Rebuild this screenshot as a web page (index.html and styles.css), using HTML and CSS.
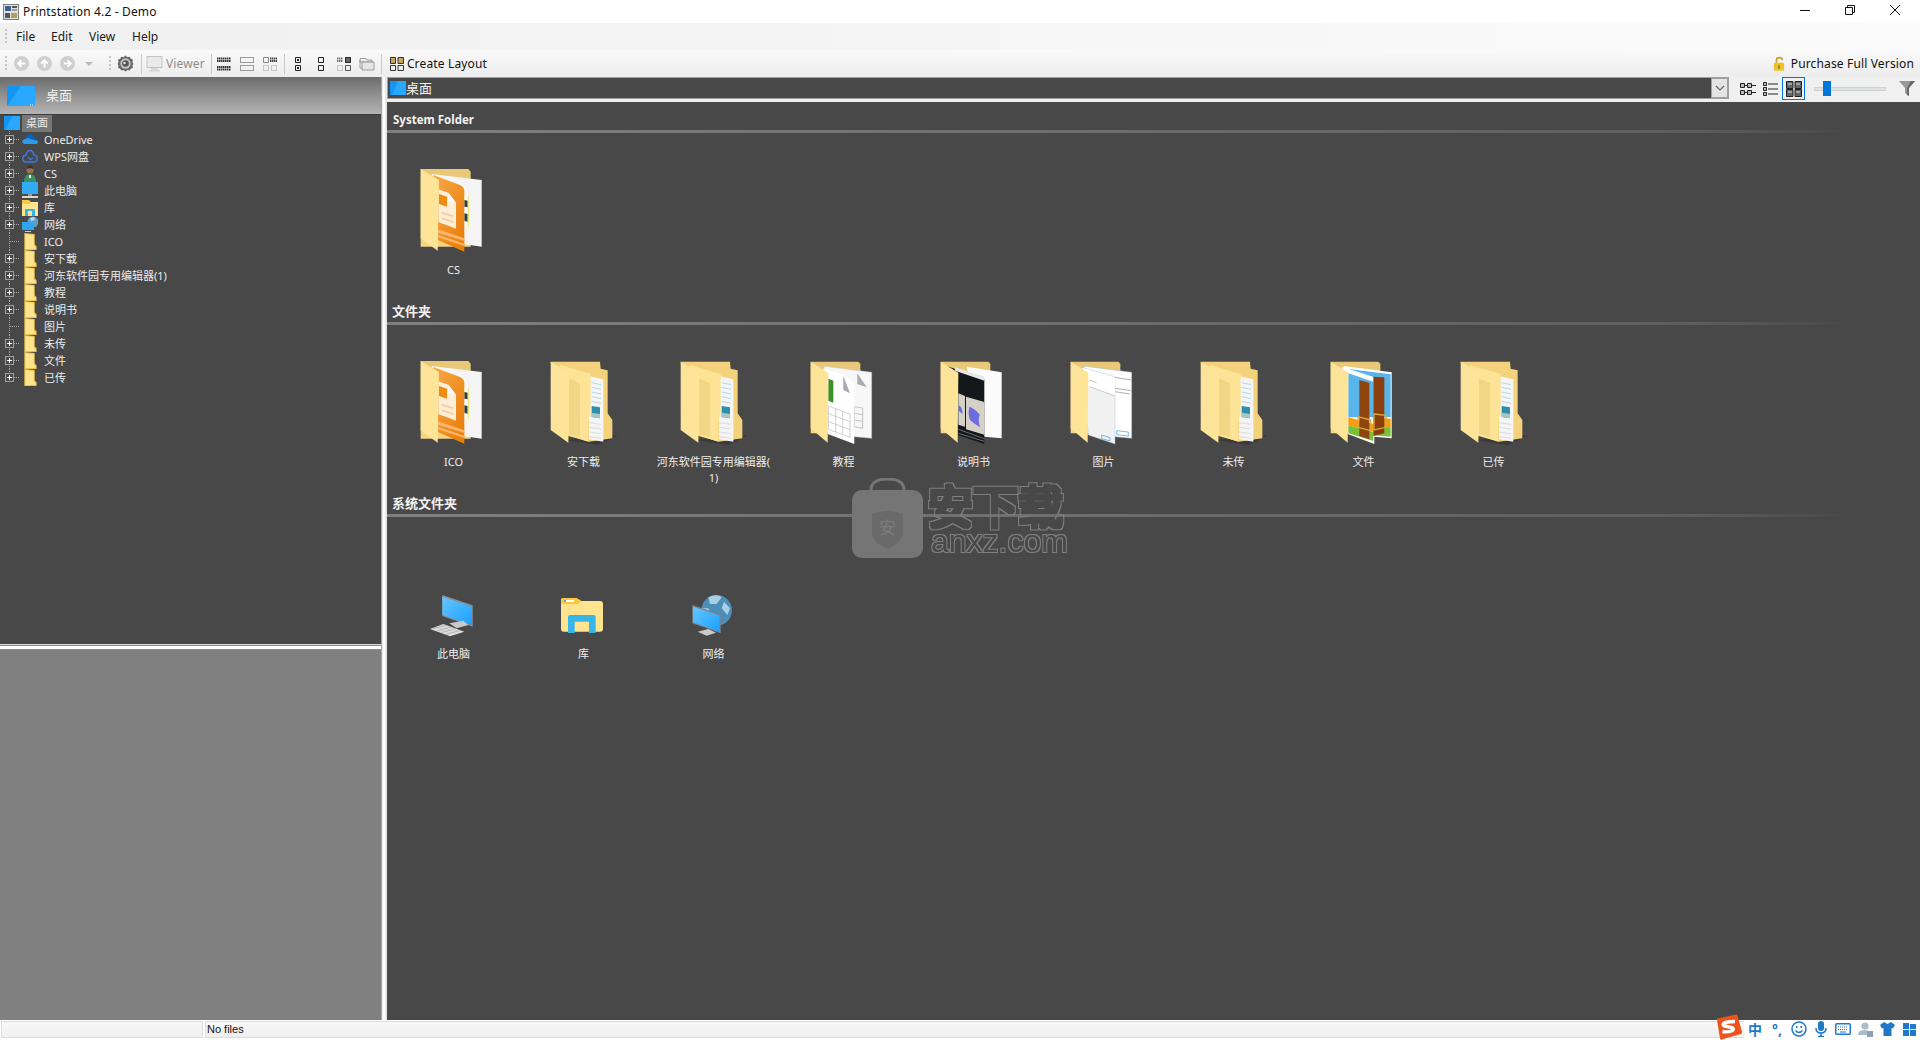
FILE: index.html
```html
<!DOCTYPE html>
<html lang="zh-CN">
<head>
<meta charset="utf-8">
<title>Printstation 4.2 - Demo</title>
<link rel="stylesheet" href="styles.css">
</head>
<body>
<svg class="defs" xmlns="http://www.w3.org/2000/svg">
  <defs>
    <filter id="wm-thick" x="-5%" y="-5%" width="110%" height="110%" color-interpolation-filters="sRGB">
      <feMorphology in="SourceAlpha" operator="dilate" radius="3" result="o"/>
      <feMorphology in="SourceAlpha" operator="dilate" radius="2" result="i"/>
      <feComposite in="o" in2="i" operator="out" result="ring"/>
      <feFlood flood-color="#808080"/>
      <feComposite in2="ring" operator="in"/>
    </filter>
    <filter id="wm-thin" x="-5%" y="-5%" width="110%" height="110%" color-interpolation-filters="sRGB">
      <feMorphology in="SourceAlpha" operator="dilate" radius="1" result="o"/>
      <feComposite in="o" in2="SourceAlpha" operator="out" result="ring"/>
      <feFlood flood-color="#808080"/>
      <feComposite in2="ring" operator="in"/>
    </filter>
    <linearGradient id="flap" x1="0" y1="0" x2="1" y2="0"><stop offset="0" stop-color="#fbe39c"/><stop offset="1" stop-color="#ffe596"/></linearGradient>
    <linearGradient id="orng" x1="0" y1="0" x2="1" y2="1"><stop offset="0" stop-color="#f9a94a"/><stop offset="1" stop-color="#e97b05"/></linearGradient>
    <linearGradient id="scr" x1="0" y1="0" x2="1" y2="1"><stop offset="0" stop-color="#66c6ff"/><stop offset="1" stop-color="#1aa0ff"/></linearGradient>
    <linearGradient id="head" x1="0" y1="0" x2="0" y2="1"><stop offset="0" stop-color="#e8c877"/><stop offset="1" stop-color="#f5d682"/></linearGradient>
    <symbol id="f-orange" viewBox="84 195 240 270">
      <path d="M107 207H250L257 215V440H107Z" fill="url(#head)"/>
      <path d="M140 222L290 240V440L235 432Z" fill="#f5f5f5"/>
      <path d="M238 285L250 288V380L238 378Z" fill="#fff"/>
      <path d="M238 300L248 302V322L238 320ZM238 340L248 342V365L238 363Z" fill="#22414d"/>
      <path d="M248 288H251V380H248Z" fill="#e4e23c"/>
      <path d="M145 225L225 255Q238 262 238 275V455L158 420Z" fill="url(#orng)"/>
      <path d="M160 268L190 278L213 308V386L160 366Z" fill="#fdeeda"/>
      <path d="M162 282L186 290V320L162 312Z" fill="#f28a12"/>
      <path d="M190 278L213 308L190 302Z" fill="#fff"/>
      <path d="M170 335L205 346V352L170 341ZM170 352L205 363V369L170 358Z" fill="#f7cd9c"/>
      <path d="M158 388L238 415V423L158 398ZM158 404L238 431V438L158 412Z" fill="#f9b66b"/>
      <path d="M107 207L162 240L158 452L107 415Z" fill="url(#flap)"/>
    </symbol>
    <symbol id="f-doc" viewBox="474 771 240 270">
      <path d="M540 1020L700 1005L640 1035Z" fill="#3a3a3a"/>
      <path d="M497 785H645L647 806L668 811V940L682 960V1015L612 1025L520 1000Z" fill="#f3d27b"/>
      <path d="M612 828L655 838V1025L612 1018Z" fill="#f5f5f5"/>
      <path d="M620 848L648 854M620 862L648 868M620 876L648 882M620 890L648 896M620 904L648 910" stroke="#8cc9ec" stroke-width="2" fill="none"/>
      <path d="M620 918L645 922V955L620 951Z" fill="#2d8fae"/>
      <path d="M620 938L645 942V955L620 951Z" fill="#a9c6c2"/>
      <path d="M612 968L648 973M612 982L648 987M612 996L648 1001M612 1010L648 1015" stroke="#cfcfcf" stroke-width="2" fill="none"/>
      <path d="M525 795L617 822V940L610 962V1025L550 1005Z" fill="#fde396"/>
      <path d="M552 835L585 850V1012L552 1002Z" fill="#f0d685"/>
      <path d="M497 785L552 818V940L550 1028L497 990Z" fill="url(#flap)"/>
    </symbol>
    <symbol id="f-sheet" viewBox="9 51 240 270">
      <path d="M32 65H175L181 71V280H32Z" fill="url(#head)"/>
      <path d="M70 78L215 97V295L163 290Z" fill="#f7f7f7" stroke="#bbb" stroke-width="1.5"/>
      <path d="M172 100L200 142L172 132Z" fill="#a9a9b2"/>
      <path d="M163 200L188 204V265L163 260ZM163 220L188 224M163 240L188 244" fill="#f7f7f7" stroke="#aaa" stroke-width="2"/>
      <path d="M70 85L130 105L163 125V312L83 282Z" fill="#fff"/>
      <path d="M130 108L150 160L130 150Z" fill="#a9a9b2"/>
      <path d="M85 116L100 122V188L85 182Z" fill="#3e8f2a"/>
      <path d="M85 198L150 222V292L85 268ZM85 221L150 245M85 245L150 269M107 206V276M128 214V284" fill="none" stroke="#b9b9b9" stroke-width="2"/>
      <path d="M32 65L85 98L83 308L32 265Z" fill="url(#flap)"/>
    </symbol>
    <symbol id="f-book" viewBox="399 51 240 270">
      <path d="M422 65H565L571 71V280H422Z" fill="url(#head)"/>
      <path d="M500 80L605 97V295L553 290Z" fill="#fbfbfb"/>
      <path d="M440 78L553 118V312L473 285Z" fill="#14181b"/>
      <path d="M465 82L553 110V122L465 92Z" fill="#e8e8e8"/>
      <path d="M475 160L495 168V260L475 254ZM498 170L553 186V284L498 268Z" fill="#d5d1c6"/>
      <path d="M508 200Q525 205 540 225Q532 235 540 262Q520 250 510 240Q503 225 508 200ZM476 195Q490 205 487 222L476 212Z" fill="#6f6be0"/>
      <path d="M475 268L553 296M475 280L553 304" stroke="#9a9a9a" stroke-width="2" fill="none"/>
      <path d="M422 65L475 98L473 308L422 265Z" fill="url(#flap)"/>
    </symbol>
    <symbol id="f-dialog" viewBox="789 51 240 270">
      <path d="M812 65H955L961 71V280H812Z" fill="url(#head)"/>
      <path d="M850 78L995 97V295L945 290Z" fill="#fff" stroke="#9db4c6" stroke-width="1.5"/>
      <path d="M945 112L993 120M945 145L993 152M945 155L990 162" stroke="#888" stroke-width="2" fill="none"/>
      <path d="M950 272L985 276V288L950 284Z" fill="none" stroke="#3d9bd8" stroke-width="2"/>
      <path d="M845 82L945 110V312L865 285Z" fill="#f1f1f1" stroke="#9db4c6" stroke-width="1"/>
      <path d="M847 84L945 112V170L866 142Z" fill="#fff"/>
      <path d="M868 120L890 128M868 140L945 168" stroke="#aaa" stroke-width="2" fill="none"/>
      <path d="M905 285L930 293V303L905 296Z" fill="none" stroke="#3d9bd8" stroke-width="2"/>
      <path d="M812 65L865 98L863 308L812 265Z" fill="url(#flap)"/>
    </symbol>
    <symbol id="f-rar" viewBox="369 51 240 270">
      <path d="M392 65H535L541 71V280H392Z" fill="url(#head)"/>
      <path d="M430 78L575 97V295L523 290Z" fill="#fff"/>
      <path d="M450 88L572 103V232L520 228Z" fill="#59b4ea"/>
      <path d="M520 232L572 236V262L520 258Z" fill="#f59d0d"/>
      <path d="M520 258L572 262V290L520 286Z" fill="#7cbf3a"/>
      <path d="M425 80L523 112V312L443 282Z" fill="#fff"/>
      <path d="M445 100L520 125V232L445 232Z" fill="#59b4ea"/>
      <path d="M445 232L520 252V275L445 256Z" fill="#f59d0d"/>
      <path d="M445 256L520 276V303L445 280Z" fill="#7cbf3a"/>
      <path d="M520 110L553 112V280L520 288Z" fill="#8a3f0c"/>
      <path d="M478 120L508 128V298L478 288Z" fill="#8f430e"/>
      <path d="M474 230L512 240V272L474 262Z" fill="none" stroke="#d9a83a" stroke-width="4"/>
      <path d="M522 222L558 226V262L522 270Z" fill="none" stroke="#d9a83a" stroke-width="4"/>
      <path d="M392 65L445 98L443 308L392 265Z" fill="url(#flap)"/>
    </symbol>
    <symbol id="s-pc" viewBox="39 207 240 270">
      <path d="M127 345L218 376V440L127 408Z" fill="#8b9096"/>
      <path d="M127 350L216 380V436L127 404Z" fill="url(#scr)"/>
      <path d="M148 430L190 422L205 435L170 445Z" fill="#c9c9c9"/>
      <path d="M90 447L130 432L193 455L150 469Z" fill="#dcdcdc"/>
      <path d="M100 446L140 436M112 452L152 442M125 457L165 447M138 463L178 452" stroke="#9d9d9d" stroke-width="2" fill="none"/>
    </symbol>
    <symbol id="s-lib" viewBox="429 207 240 270">
      <path d="M483 363H600Q609 363 609 372V446Q609 455 600 455H490Q483 455 483 448Z" fill="#ffe48f"/>
      <path d="M483 358Q483 354 488 354H530L545 363L533 372H483Z" fill="#fcc93d"/>
      <path d="M492 360H522V366H492Z" fill="#fff"/>
      <path d="M492 360H498V366H492Z" fill="#37b4e8"/>
      <path d="M504 459V411Q504 405 510 405H581Q587 405 587 411V459H567V425H524V459Z" fill="#38b5e8"/>
    </symbol>
    <symbol id="s-net" viewBox="819 207 240 270">
      <circle cx="950" cy="391" r="46" fill="#4b8fb8"/>
      <path d="M925 352Q950 340 965 352L950 372L930 372ZM972 365L990 385L982 405L965 385ZM905 385L925 385L935 405L915 415Z" fill="#a8cfe3"/>
      <path d="M877 375L962 403V460L877 430Z" fill="#7d8388"/>
      <path d="M879 380L958 406V455L879 427Z" fill="url(#scr)"/>
      <path d="M893 455L925 447L948 458L920 467Z" fill="#c9c9c9"/>
    </symbol>
    <symbol id="t-folder" viewBox="0 0 16 18">
      <path d="M2 0L13 1V12L15 14V18H2Z" fill="#e9c24c"/>
      <path d="M3 1L12 2V13L14 15V17H3Z" fill="#ffe38d"/>
    </symbol>
    <symbol id="t-pc" viewBox="0 0 16 17">
      <rect width="16" height="12" fill="#34aaf5"/>
      <rect x="6" y="12" width="4" height="2" fill="#9a9a9a"/>
      <rect y="14" width="16" height="2" fill="#d8d8d8"/>
    </symbol>
    <symbol id="t-lib" viewBox="0 0 16 17">
      <path d="M0 3H16V17H0Z" fill="#ffe48f"/>
      <path d="M0 1H7L9 3L7 5H0Z" fill="#fcc93d"/>
      <path d="M3 17V10H13V17H10V12H6V17Z" fill="#38b5e8"/>
    </symbol>
    <symbol id="t-net" viewBox="0 0 16 17">
      <circle cx="11" cy="6" r="5.5" fill="#5f9fc6"/>
      <path d="M8 2L12 1L13 4L9 5Z" fill="#b9d9ea"/>
      <path d="M0 6H12V14H0Z" fill="#2fa5f2"/>
      <path d="M3 15H9V16H3Z" fill="#c9c9c9"/>
    </symbol>
    <symbol id="t-cs" viewBox="0 0 16 17">
      <circle cx="8" cy="5" r="3.5" fill="#9b6f52"/>
      <path d="M4.5 4Q5 0.5 8 0.5Q11 0.5 11.500 4Q8 2.500 4.500 4Z" fill="#3c3128"/>
      <path d="M2 17Q2 9 8 9Q14 9 14 17Z" fill="#3f8d62"/>
      <path d="M7 10H9V13H7Z" fill="#e8e8e8"/>
    </symbol>
    <symbol id="t-od" viewBox="0 0 16 17">
      <path d="M3 8Q4 3 8 3Q11 3 12 6Q15 6 16 9L7 10Z" fill="#0a5fb4"/>
      <path d="M2 13Q-1 11 1 9Q2 8 4 8Q6 6 8 8L16 10Q16 13 14 13Z" fill="#2a9be8"/>
    </symbol>
    <symbol id="t-wps" viewBox="0 0 16 17">
      <path d="M4 14H12Q15.200 14 15.200 10.500Q15.200 7.500 12 7Q11 2.500 8 2.500Q5 2.500 4 7Q0.800 7.500 0.800 10.500Q0.800 14 4 14Z" fill="none" stroke="#3d77e0" stroke-width="1.400"/>
      <path d="M6 9L8.500 11.500L11 10" fill="none" stroke="#3d77e0" stroke-width="1.400"/>
    </symbol>
  </defs>
</svg>

<header class="titlebar">
  <svg class="appicon" viewBox="0 0 16 16" width="16" height="16"><rect x="0.500" y="0.500" width="15" height="15" fill="#dfe3e8" stroke="#7d7d7d"/><rect x="2" y="2" width="6" height="5" fill="#3e5f86"/><rect x="9" y="2" width="5" height="2" fill="#555"/><rect x="9" y="5" width="5" height="2" fill="#999"/><rect x="2" y="9" width="5" height="5" fill="#555"/><rect x="8" y="9" width="6" height="5" fill="#b4a04e"/></svg>
  <span class="apptitle">Printstation 4.2 - Demo</span>
  <div class="winctl">
    <svg viewBox="0 0 12 12" width="12" height="12"><path d="M1 6.500H11" stroke="#111" fill="none"/></svg>
    <svg viewBox="0 0 12 12" width="12" height="12"><path d="M1.500 3.500H8.500V10.500H1.500ZM3.500 3.500V1.500H10.500V8.500H8.500" stroke="#111" fill="none"/></svg>
    <svg viewBox="0 0 12 12" width="12" height="12"><path d="M1 1L11 11M11 1L1 11" stroke="#111" fill="none"/></svg>
  </div>
</header>

<nav class="menubar">
  <span class="grip"></span>
  <span class="menu m-file">File</span>
  <span class="menu m-edit">Edit</span>
  <span class="menu m-view">View</span>
  <span class="menu">Help</span>
</nav>

<div class="toolbar">
  <span class="grip"></span>
  <span class="tb tb23"><svg viewBox="0 0 18 18" width="17" height="17"><circle cx="9" cy="9" r="8" fill="#cfcfcf"/><path d="M13 9H6M9 5.500L5.500 9L9 12.500" stroke="#fff" stroke-width="2" fill="none"/></svg></span>
  <span class="tb tb23"><svg viewBox="0 0 18 18" width="17" height="17"><circle cx="9" cy="9" r="8" fill="#cfcfcf"/><path d="M9 13.500V6M5.500 9L9 5.500L12.500 9" stroke="#fff" stroke-width="2" fill="none"/></svg></span>
  <span class="tb tb23"><svg viewBox="0 0 18 18" width="17" height="17"><circle cx="9" cy="9" r="8" fill="#cfcfcf"/><path d="M5 9H12M9 5.500L12.500 9L9 12.500" stroke="#fff" stroke-width="2" fill="none"/></svg></span>
  <span class="tb tb-drop"><svg viewBox="0 0 8 4" width="8" height="4"><path d="M0 0H8L4 4Z" fill="#bbb"/></svg></span>
  <span class="grip g-gear"></span>
  <span class="tb tb-gear"><svg viewBox="0 0 18 18" width="17" height="17"><path d="M9 .5L11 2.500L13.500 1.800L14.500 4L17 5L16.200 7.500L17.500 9.500L16.200 11.500L17 13.500L14.500 14.500L13.500 16.500L11 16L9 17.500L7 16L4.500 16.500L3.500 14.500L1 13.500L1.800 11.500L.5 9.500L1.800 7.500L1 5L3.500 4L4.500 1.800L7 2.500Z" fill="#666"/><circle cx="9" cy="9" r="5.500" fill="#c4c4c4"/><circle cx="9" cy="9" r="3.500" fill="#555"/><circle cx="8" cy="8.500" r="1.300" fill="#ddd"/></svg></span>
  <span class="sep"></span>
  <span class="tb tb-mon"><svg viewBox="0 0 17 16" width="17" height="16"><rect x="1" y="0.500" width="15" height="11" fill="#eaeaea" stroke="#c4c4c4"/><path d="M5 12H12V14H14V15.500H3V14H5Z" fill="#d6d6d6"/></svg></span>
  <span class="tlabel dim">Viewer</span>
  <span class="sep s2"></span>
  <span class="tb tb-ic"><svg viewBox="0 0 14 14" width="14" height="14"><path d="M0 1.500H14M0 4H14M0 10H14M0 12.500H14" stroke="#333" stroke-width="2" stroke-dasharray="1.500 .5" fill="none"/></svg></span>
  <span class="tb tb-ic"><svg viewBox="0 0 14 14" width="14" height="14"><path d="M.5 .5H13.500V5.500H.5ZM.5 8.500H13.500V13.500H.5Z" stroke="#444" stroke-dasharray="1 1" fill="none"/></svg></span>
  <span class="tb tb-ic"><svg viewBox="0 0 14 14" width="14" height="14"><path d="M.5 .5H5.500V5.500H.5Z" stroke="#888" fill="none"/><path d="M7 1.500H14M7 4H14" stroke="#444" stroke-width="2" stroke-dasharray="1.500 .5"/><path d="M.5 8.500H5.500V13.500H.5ZM8.500 8.500H13.500V13.500H8.500Z" stroke="#999" stroke-dasharray="1 1" fill="none"/></svg></span>
  <span class="sep s3"></span>
  <span class="tb tb-ic"><svg viewBox="0 0 6 14" width="6" height="14"><path d="M.5 .5H5.500V5.500H.5ZM.5 8.500H5.500V13.500H.5Z" stroke="#222" fill="none"/><path d="M2 2H4V4H2ZM2 10H4V12H2Z" fill="#222"/></svg></span>
  <span class="tb tb-ic"><svg viewBox="0 0 6 14" width="6" height="14"><path d="M.5 .5H5.500V5.500H.5ZM.5 8.500H5.500V13.500H.5Z" stroke="#222" fill="none"/></svg></span>
  <span class="tb tb-ic"><svg viewBox="0 0 14 14" width="14" height="14"><path d="M0 1.500H6M0 4H6" stroke="#777" stroke-width="2" stroke-dasharray="1.500 .5"/><path d="M8.500 .5H13.500V5.500H8.500Z" stroke="#222" fill="#666"/><path d="M.5 8.500H5.500V13.500H.5Z" stroke="#999" stroke-dasharray="1 1" fill="none"/><path d="M8.500 8.500H13.500V13.500H8.500Z" stroke="#555" fill="none"/></svg></span>
  <span class="tb tb-ic"><svg viewBox="0 0 16 15" width="16" height="15"><path d="M1 2.500H7L8 4H13V6H1Z" fill="#eee" stroke="#888" stroke-width=".8"/><path d="M3 6H15V14H3Z" fill="#e6e6e6" stroke="#888" stroke-width=".8"/><path d="M1 4V12H3" fill="none" stroke="#888" stroke-width=".8"/></svg></span>
  <span class="sep s4"></span>
  <span class="tb tb-layout"><svg viewBox="0 0 14 14" width="14" height="14"><path d="M.5 .5H5.500V6.500H.5ZM8 .5H13.500V6.500H8Z" fill="#c9a55b" stroke="#333"/><path d="M.5 8.500H5.500V13.500H.5ZM8 8.500H13.500V13.500H8Z" fill="#eee" stroke="#333"/></svg></span>
  <span class="tlabel">Create Layout</span>
  <span class="buy">
    <svg viewBox="0 0 14 17" width="12" height="16"><path d="M4 7V4Q4 1 7.500 1Q10.500 1 11 4" fill="none" stroke="#c9a227" stroke-width="2"/><rect x="1" y="7" width="12" height="9.500" rx="1.500" fill="#edc32c"/><rect x="6" y="10" width="2" height="4" fill="#9a7a12"/></svg>
    <span class="tlabel">Purchase Full Version</span>
  </span>
</div>

<div class="workspace">
  <aside class="left">
    <div class="lefthead">
      <svg viewBox="0 0 28 20" width="28" height="20"><rect width="28" height="20" fill="#1295f5"/><path d="M14 0H28V20H0Z" fill="#2aa8ff"/><path d="M23 19H27" stroke="#fff" stroke-dasharray="1 1"/></svg>
      <span class="headtxt">桌面</span>
    </div>
    <div class="tree">
      <div class="troot">
        <svg viewBox="0 0 16 14" width="16" height="14"><rect width="16" height="14" fill="#1295f5"/><path d="M8 0H16V14H2Z" fill="#2aa8ff"/></svg>
        <span class="sel">桌面</span>
      </div>
      <div class="trow"><span class="conn"><span class="plus"></span></span><svg class="ti"><use href="#t-od"/></svg><span class="tname">OneDrive</span></div>
      <div class="trow"><span class="conn"><span class="plus"></span></span><svg class="ti"><use href="#t-wps"/></svg><span class="tname">WPS网盘</span></div>
      <div class="trow"><span class="conn"><span class="plus"></span></span><svg class="ti"><use href="#t-cs"/></svg><span class="tname">CS</span></div>
      <div class="trow"><span class="conn"><span class="plus"></span></span><svg class="ti"><use href="#t-pc"/></svg><span class="tname">此电脑</span></div>
      <div class="trow"><span class="conn"><span class="plus"></span></span><svg class="ti"><use href="#t-lib"/></svg><span class="tname">库</span></div>
      <div class="trow"><span class="conn"><span class="plus"></span></span><svg class="ti"><use href="#t-net"/></svg><span class="tname">网络</span></div>
      <div class="trow"><span class="conn"></span><svg class="ti"><use href="#t-folder"/></svg><span class="tname">ICO</span></div>
      <div class="trow"><span class="conn"><span class="plus"></span></span><svg class="ti"><use href="#t-folder"/></svg><span class="tname">安下载</span></div>
      <div class="trow"><span class="conn"><span class="plus"></span></span><svg class="ti"><use href="#t-folder"/></svg><span class="tname">河东软件园专用编辑器(1)</span></div>
      <div class="trow"><span class="conn"><span class="plus"></span></span><svg class="ti"><use href="#t-folder"/></svg><span class="tname">教程</span></div>
      <div class="trow"><span class="conn"><span class="plus"></span></span><svg class="ti"><use href="#t-folder"/></svg><span class="tname">说明书</span></div>
      <div class="trow"><span class="conn"></span><svg class="ti"><use href="#t-folder"/></svg><span class="tname">图片</span></div>
      <div class="trow"><span class="conn"><span class="plus"></span></span><svg class="ti"><use href="#t-folder"/></svg><span class="tname">未传</span></div>
      <div class="trow"><span class="conn"><span class="plus"></span></span><svg class="ti"><use href="#t-folder"/></svg><span class="tname">文件</span></div>
      <div class="trow last"><span class="conn"><span class="plus"></span></span><svg class="ti"><use href="#t-folder"/></svg><span class="tname">已传</span></div>
    </div>
    <div class="hsplit"></div>
    <div class="preview"></div>
  </aside>
  <div class="vsplit"></div>
  <main class="right">
    <div class="addrrow">
      <div class="addr">
        <svg viewBox="0 0 16 14" width="16" height="14"><rect width="16" height="14" fill="#1295f5"/><path d="M8 0H16V14H2Z" fill="#2aa8ff"/></svg>
        <span class="addrtxt">桌面</span>
      </div>
      <div class="addrdrop"><svg viewBox="0 0 10 6" width="10" height="6"><path d="M1 1L5 5L9 1" fill="none" stroke="#666" stroke-width="1.200"/></svg></div>
      <span class="vbtn v1"><svg viewBox="0 0 16 12" width="16" height="12"><path d="M.5 .5H4.500V4.500H.5ZM7.500 .5H11.500V4.500H7.500ZM.5 7.500H4.500V11.500H.5ZM7.500 7.500H11.500V11.500H7.500Z" fill="#bbb" stroke="#222"/><path d="M5 2.500H7M12 2.500H16M5 9.500H7M12 9.500H16" stroke="#222"/></svg></span>
      <span class="vbtn"><svg viewBox="0 0 16 14" width="16" height="14"><path d="M.5 .5H3.500V3.500H.5ZM.5 5.500H3.500V8.500H.5ZM.5 10.500H3.500V13.500H.5Z" fill="#bbb" stroke="#222"/><path d="M5 2H15M5 7H15M5 12H15" stroke="#222"/></svg></span>
      <span class="vbtn active"><svg viewBox="0 0 16 16" width="16" height="16"><path d="M.5 .5H7V7.500H.5ZM9 .5H15.500V7.500H9ZM.5 8.500H7V15.500H.5ZM9 8.500H15.500V15.500H9Z" fill="#666" stroke="#222"/><path d="M2 3H6M10 3H14M2 11H6M10 11H14" stroke="#ddd"/></svg></span>
      <div class="slider"><span class="thumb"></span></div>
      <svg class="filter" viewBox="0 0 16 15" width="16" height="15"><path d="M0 0H16L10 7V15L6 12V7Z" fill="#999"/><path d="M10 7L16 0H12L8 7V14L10 15Z" fill="#666"/></svg>
    </div>
    <div class="content">
      <section class="group">
        <h2 class="ghead latin">System Folder</h2>
        <div class="items">
          <figure class="item"><svg class="big"><use href="#f-orange"/></svg><figcaption>CS</figcaption></figure>
        </div>
      </section>
      <section class="group">
        <h2 class="ghead">文件夹</h2>
        <div class="items">
          <figure class="item"><svg class="big"><use href="#f-orange"/></svg><figcaption>ICO</figcaption></figure>
          <figure class="item"><svg class="big"><use href="#f-doc"/></svg><figcaption>安下载</figcaption></figure>
          <figure class="item"><svg class="big"><use href="#f-doc"/></svg><figcaption>河东软件园专用编辑器(<br>1)</figcaption></figure>
          <figure class="item"><svg class="big"><use href="#f-sheet"/></svg><figcaption>教程</figcaption></figure>
          <figure class="item"><svg class="big"><use href="#f-book"/></svg><figcaption>说明书</figcaption></figure>
          <figure class="item"><svg class="big"><use href="#f-dialog"/></svg><figcaption>图片</figcaption></figure>
          <figure class="item"><svg class="big"><use href="#f-doc"/></svg><figcaption>未传</figcaption></figure>
          <figure class="item"><svg class="big"><use href="#f-rar"/></svg><figcaption>文件</figcaption></figure>
          <figure class="item"><svg class="big"><use href="#f-doc"/></svg><figcaption>已传</figcaption></figure>
        </div>
      </section>
      <section class="group">
        <h2 class="ghead">系统文件夹</h2>
        <div class="items">
          <figure class="item"><svg class="big"><use href="#s-pc"/></svg><figcaption>此电脑</figcaption></figure>
          <figure class="item"><svg class="big"><use href="#s-lib"/></svg><figcaption>库</figcaption></figure>
          <figure class="item"><svg class="big"><use href="#s-net"/></svg><figcaption>网络</figcaption></figure>
        </div>
      </section>
      <div class="watermark">
        <svg viewBox="0 0 71 80" width="71" height="80"><path d="M19 16V12Q19 1 35.500 1Q52 1 52 12V16" fill="none" stroke="#757575" stroke-width="3"/><rect y="12" width="71" height="68" rx="10" fill="#757575"/><path d="M20 36Q35 30 51 36V56Q48 66 35.500 71Q23 66 20 56Z" fill="#6a6a6a"/><text class="wm-mark" x="35.500" y="56">安</text></svg>
        <div class="wmtext"><span class="wm-cn">安下载</span><span class="wm-en">anxz.com</span></div>
      </div>
    </div>
  </main>
</div>

<footer class="status">
  <div class="cell c1"></div>
  <div class="cell c2">No files</div>
  <div class="tray">
    <svg class="sogou" viewBox="0 0 28 26" width="28" height="26"><path d="M3 6Q2 5 4 4.500L22 .5Q23 .3 23.500 1.500L28 18Q28.200 19.500 27 20L7.500 25.500Q6.500 25.800 6 24.500Z" fill="#f0521c"/><path d="M21 7.500Q12 7.500 9.500 9.500Q8 12 13 12.500L18 13.500Q21 15.500 17.500 17Q13 18.500 8.500 17.500" fill="none" stroke="#fff" stroke-width="3.400"/></svg>
    <span class="slot tray-t">中</span>
    <span class="slot tray-t">°,</span>
    <span class="slot"><svg viewBox="0 0 16 16" width="16" height="16"><circle cx="8" cy="8" r="7" fill="none" stroke="#1f78c8" stroke-width="1.500"/><path d="M4.500 9.500Q8 13.500 11.500 9.500" fill="none" stroke="#1f78c8" stroke-width="1.300"/><path d="M5 5H6.500V7H5ZM9.500 5H11V7H9.500Z" fill="#1f78c8"/></svg></span>
    <span class="slot"><svg viewBox="0 0 12 16" width="12" height="16"><rect x="3" y="0" width="6" height="10" rx="3" fill="#1f78c8"/><path d="M1 7Q1 12 6 12Q11 12 11 7M6 12V15M3 15.500H9" fill="none" stroke="#1f78c8" stroke-width="1.500"/></svg></span>
    <span class="slot"><svg viewBox="0 0 16 12" width="16" height="12"><rect x=".75" y=".75" width="14.500" height="10.500" rx="1" fill="none" stroke="#1f78c8" stroke-width="1.500"/><path d="M3 4H13M3 6.500H13" stroke="#1f78c8" stroke-dasharray="1 1"/><path d="M5 9H11" stroke="#1f78c8"/></svg></span>
    <span class="slot"><svg viewBox="0 0 15 15" width="15" height="15"><circle cx="7" cy="4" r="3.500" fill="#a7bccd"/><path d="M0 13Q0 8 7 8Q9 8 10 9V13Z" fill="#a7bccd"/><rect x="9" y="9" width="6" height="6" fill="#8aa2b5"/></svg></span>
    <span class="slot"><svg viewBox="0 0 15 14" width="15" height="14"><path d="M4 0L7.500 2L11 0L15 3L13 6.500L11.500 6V14H3.500V6L2 6.500L0 3Z" fill="#1f78c8"/></svg></span>
    <span class="slot"><svg viewBox="0 0 13 13" width="13" height="13"><path d="M0 0H6V6H0ZM7 1H13V6H7ZM0 7H6V13H0ZM7 7H13V13H7Z" fill="#1f78c8"/></svg></span>
  </div>
</footer>
</body>
</html>
```
FILE: styles.css
```css
* { box-sizing: border-box; }
html, body { margin: 0; padding: 0; }
body {
  width: 1920px;
  height: 1040px;
  overflow: hidden;
  display: flex;
  flex-direction: column;
  background: #f0f0f0;
  font-family: "Noto Sans", "Noto Sans CJK SC", sans-serif;
  font-size: 11px;
  color: #111;
}
.defs { display: block; width: 0; height: 0; }

.titlebar {
  height: 23px;
  background: #fff;
  display: flex;
  align-items: center;
  padding-left: 3px;
  flex: none;
}
.apptitle { margin-left: 4px; font-size: 12px; color: #111; letter-spacing: .15px; }
.winctl { margin-left: auto; display: flex; gap: 33px; padding-right: 19px; margin-top: -4px; }

.menubar {
  height: 27px;
  flex: none;
  display: flex;
  align-items: center;
  padding-left: 5px;
  font-size: 12px;
  color: #1a1a1a;
  background: linear-gradient(90deg, #f0f0f0 0, #f3f3f3 30%, #fbfbfb 100%);
}
.grip {
  width: 2px;
  height: 16px;
  margin-right: 9px;
  background: repeating-linear-gradient(180deg, #c4c4c4 0 2px, transparent 2px 4px);
}
.menu { display: block; }
.m-file { width: 35px; }
.m-edit { width: 38px; }
.m-view { width: 43px; }

.toolbar {
  height: 27px;
  flex: none;
  display: flex;
  align-items: center;
  padding-left: 5px;
  padding-right: 6px;
  background: linear-gradient(180deg, #fafafa, #ececec);
  font-size: 12px;
}
.toolbar > .grip { margin-right: 3px; }
.tb { display: flex; align-items: center; justify-content: center; flex: none; }
.tb23 { width: 23px; }
.tb-drop { width: 20px; }
.toolbar > .g-gear { margin-left: 10px; margin-right: 6px; }
.tb-gear { width: 17px; }
.sep { width: 1px; height: 20px; background: #c8c8c8; margin-left: 7px; margin-right: 4px; flex: none; }
.tb-mon { width: 17px; }
.tlabel { color: #111; margin-left: 3px; white-space: nowrap; letter-spacing: .15px; }
.tlabel.dim { color: #8d8d8d; }
.s2 { margin-left: 6px; margin-right: 1px; }
.tb-ic { width: 23px; }
.s3 { margin-left: 2px; margin-right: 2px; }
.s4 { margin-left: 2px; margin-right: 8px; }
.tb-layout { width: 14px; }
.buy { margin-left: auto; display: flex; align-items: center; gap: 6px; }
.buy .tlabel { margin-left: 0; }

.workspace { flex: 1; display: flex; min-height: 0; }
.left { width: 381px; flex: none; display: flex; flex-direction: column; }
.lefthead {
  height: 37px;
  flex: none;
  display: flex;
  align-items: center;
  padding-left: 7px;
  gap: 11px;
  font-size: 13px;
  color: #f2f2f2;
  background: linear-gradient(180deg, #6c6c6c, #b4b4b4);
}
.headtxt { margin-top: -2px; }
.tree {
  height: 530px;
  flex: none;
  background: #484848;
  border-top: 1px solid #3c3c3c;
  color: #ececec;
}
.troot { display: flex; align-items: center; height: 16px; padding-left: 4px; gap: 2px; }
.sel { background: #777; height: 17px; line-height: 16px; padding: 0 4px; width: 30px; }
.trow { display: flex; align-items: center; height: 17px; white-space: nowrap; }
.tname { padding-bottom: 1px; }
.conn { position: relative; width: 22px; height: 17px; flex: none; }
.conn::before {
  content: "";
  position: absolute;
  left: 9px;
  top: 0;
  bottom: 0;
  border-left: 1px dotted #a8a8a8;
}
.conn::after {
  content: "";
  position: absolute;
  left: 10px;
  top: 8px;
  width: 9px;
  border-top: 1px dotted #a8a8a8;
}
.last .conn::before { bottom: 8px; }
.plus {
  position: absolute;
  z-index: 1;
  left: 5px;
  top: 4px;
  width: 9px;
  height: 9px;
  border: 1px solid #a0a0a0;
  background:
    linear-gradient(#fff, #fff) center / 5px 1px no-repeat,
    linear-gradient(#fff, #fff) center / 1px 5px no-repeat,
    #484848;
}
.ti { width: 16px; height: 17px; margin-right: 6px; flex: none; }
.hsplit {
  height: 6px;
  flex: none;
  background: linear-gradient(180deg, #d8d8d8 0 1px, #8a8a8a 1px 2px, #fff 2px 5px, #8a8a8a 5px 6px);
}
.preview { flex: 1; background: #808080; }
.vsplit {
  width: 6px;
  flex: none;
  background: linear-gradient(90deg, #a8a8a8 0 1px, #e8e8e8 1px 2px, #fff 2px 4px, #e8e8e8 4px 6px);
}
.right { flex: 1; display: flex; flex-direction: column; min-width: 0; }
.addrrow {
  height: 25px;
  flex: none;
  display: flex;
  align-items: flex-start;
  background: #f0f0f0;
  padding-right: 5px;
}
.addr {
  flex: 1;
  height: 22px;
  background: #484848;
  border: 1px solid #a0a0a0;
  border-width: 1px 0 1px 1px;
  display: flex;
  align-items: center;
  padding-left: 2px;
  color: #f2f2f2;
  font-size: 13px;
}
.addrtxt { margin-top: -2px; }
.addrdrop {
  width: 18px;
  height: 22px;
  flex: none;
  background: #e4e4e4;
  border: 2px solid #a0a0a0;
  border-left: 1px solid #a0a0a0;
  display: flex;
  align-items: center;
  justify-content: center;
}
.vbtn {
  width: 23px;
  height: 23px;
  flex: none;
  display: flex;
  align-items: center;
  justify-content: center;
}
.v1 { margin-left: 7px; }
.active { border: 1px solid #0078d7; }
.slider {
  position: relative;
  width: 72px;
  height: 4px;
  margin: 10px 0 0 9px;
  background: #dfe3e0;
  border: 1px solid #cfd3d0;
  flex: none;
}
.thumb {
  position: absolute;
  left: 8px;
  top: -7px;
  width: 8px;
  height: 15px;
  background: #0078d7;
}
.filter { margin: 4px 0 0 13px; flex: none; }

.content {
  position: relative;
  flex: 1;
  background: #484848;
  color: #f0f0f0;
  overflow: hidden;
}
.group { height: 192px; }
.ghead {
  margin: 0;
  height: 31px;
  padding: 9px 0 0 5px;
  font-size: 13px;
  line-height: 16px;
  font-weight: 700;
  color: #f2f2f2;
  background: linear-gradient(90deg, #808080, #5e5e5e 85%, #484848 96%) left bottom / 100% 3px no-repeat;
}
.ghead.latin { font-size: 11.5px; padding: 10px 0 0 6px; }
.items { display: flex; padding: 32px 0 0 1px; }
.item { width: 130px; margin: 0; flex: none; text-align: center; }
.big { display: block; width: 80px; height: 90px; margin: 0 auto; }
.item figcaption { margin-top: 7px; padding-left: 1px; line-height: 16px; font-size: 11px; color: #ededed; }

.watermark {
  position: absolute;
  left: 465px;
  top: 376px;
  display: flex;
  gap: 5px;
}
.wm-mark { font-size: 17px; fill: #7c7c7c; text-anchor: middle; }
.wmtext { display: flex; flex-direction: column; padding-top: 6px; }
.wm-cn {
  font-size: 45px;
  line-height: 46px;
  color: #808080;
  filter: url(#wm-thick);
  white-space: nowrap;
}
.wm-en {
  font-family: "Liberation Sans", sans-serif;
  font-size: 32px;
  line-height: 22px;
  margin-left: 3px;
  color: #808080;
  filter: url(#wm-thin);
}

.status {
  height: 20px;
  flex: none;
  display: flex;
  background: #fff;
  padding: 1px 0 2px 1px;
  gap: 2px;
  position: relative;
}
.cell { border: 1px solid #dcdcdc; background: linear-gradient(180deg, #f8f8f8, #efefef); line-height: 14px; }
.c1 { width: 202px; }
.c2 { flex: 1; padding-left: 1px; color: #111; font-family: "Liberation Sans", sans-serif; font-size: 11px; }
.tray {
  position: absolute;
  right: 0;
  bottom: 0;
  left: 1714px;
  height: 26px;
  display: flex;
  align-items: flex-end;
  background: linear-gradient(90deg, transparent 0 30px, #fff 30px) bottom / 100% 20px no-repeat;
}
.sogou { margin-right: 2px; flex: none; }
.slot { width: 22px; height: 22px; flex: none; display: flex; align-items: center; justify-content: center; }
.tray-t { color: #1f78c8; font-weight: 700; font-size: 14px; }
```
